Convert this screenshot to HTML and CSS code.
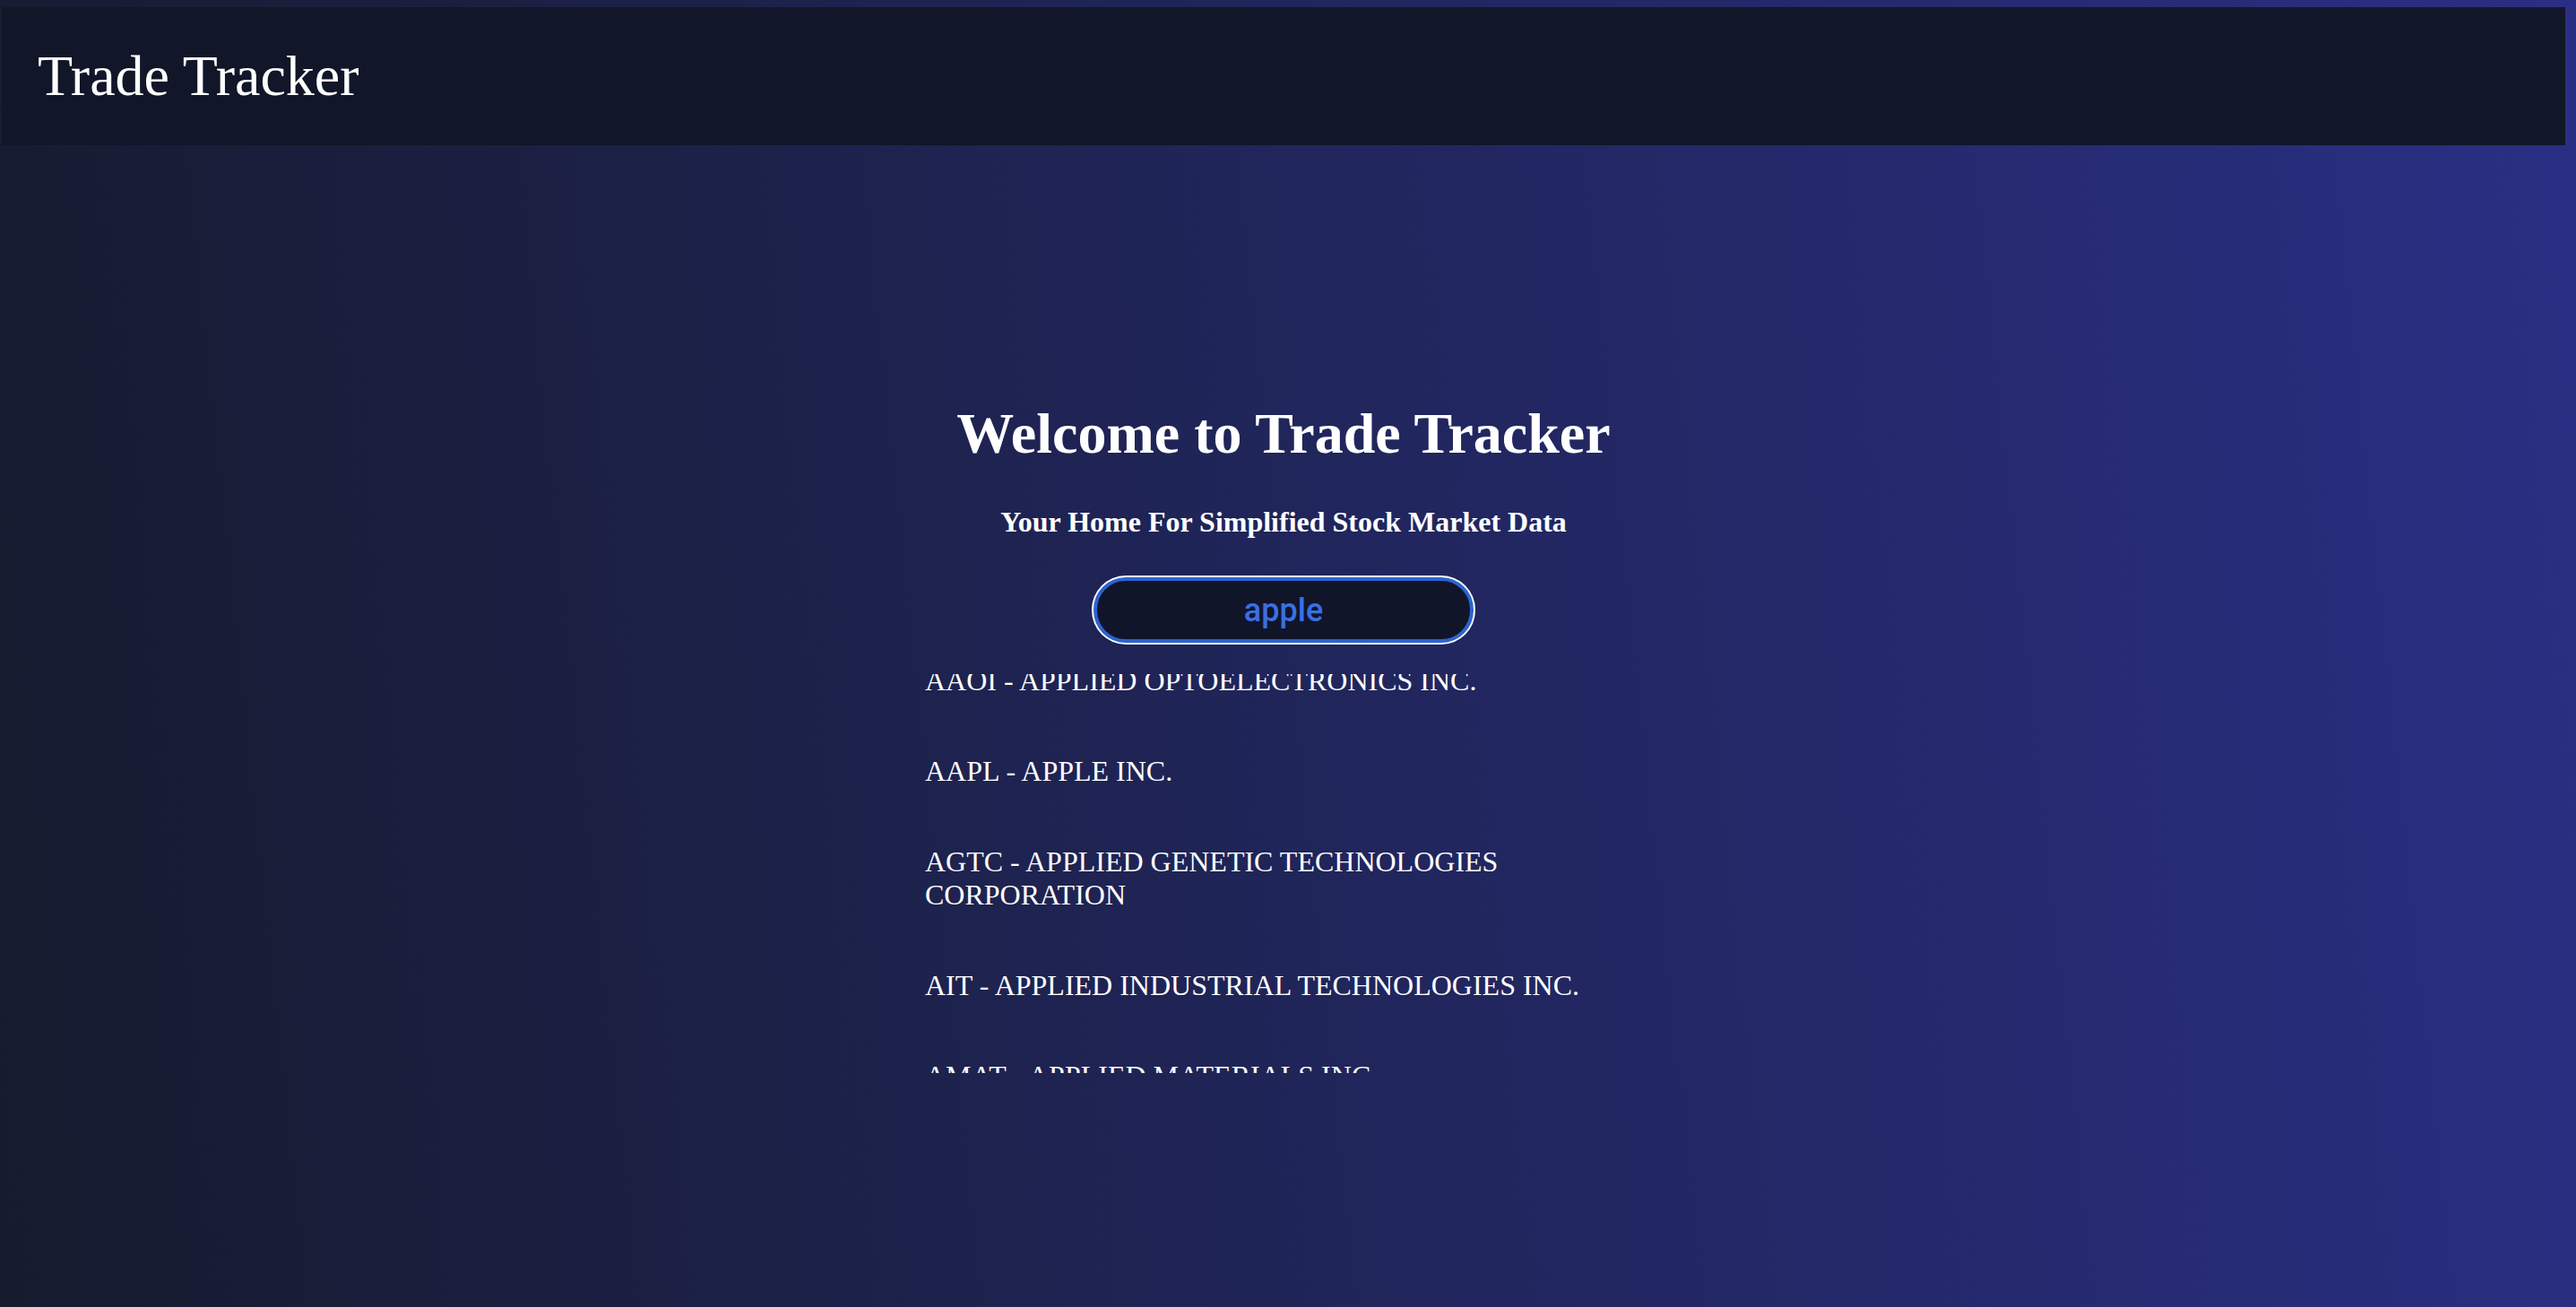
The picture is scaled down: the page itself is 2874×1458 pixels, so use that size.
FILE: index.html
```html
<!DOCTYPE html>
<html lang="en">
<head>
<meta charset="utf-8">
<title>Trade Tracker</title>
<link rel="stylesheet" href="styles.css">
</head>
<body>
<div class="page">
  <header class="topbar">
    <div class="brand">Trade Tracker</div>
  </header>
  <main class="hero">
    <h1 class="title">Welcome to Trade Tracker</h1>
    <h2 class="subtitle">Your Home For Simplified Stock Market Data</h2>
    <input class="search" type="text" value="apple">
    <div class="results">
      <ul class="result-list">
        <li class="result">AAOI - APPLIED OPTOELECTRONICS INC.</li>
        <li class="result">AAPL - APPLE INC.</li>
        <li class="result">AGTC - APPLIED GENETIC TECHNOLOGIES CORPORATION</li>
        <li class="result">AIT - APPLIED INDUSTRIAL TECHNOLOGIES INC.</li>
        <li class="result">AMAT - APPLIED MATERIALS INC.</li>
        <li class="result">APLE - APPLE HOSPITALITY REIT INC.</li>
      </ul>
    </div>
  </main>
</div>
</body>
</html>
```

FILE: styles.css
```css
html, body {
  margin: 0;
  padding: 0;
}

body {
  font-family: "Liberation Serif", "Times New Roman", serif;
  color: #ffffff;
  background: linear-gradient(84deg, #161b2e 0%, #20255a 50%, #2a2f84 100%);
  min-height: 100vh;
  overflow: hidden;
}

.page {
  display: flex;
  flex-direction: column;
  min-height: 1458px;
}

.topbar {
  margin: 8px 12px 0 2px;
  height: 154px;
  background: #111628;
  display: flex;
  align-items: center;
  padding-left: 40px;
}

.brand {
  font-size: 64px;
  line-height: 74px;
  font-weight: normal;
  margin-top: 0;
}

.hero {
  display: flex;
  flex-direction: column;
  align-items: center;
  padding-top: 285px;
  padding-right: 10px;
}

.title {
  margin: 0;
  font-size: 64px;
  line-height: 74px;
  font-weight: bold;
}

.subtitle {
  margin: 43px 0 0;
  font-size: 32px;
  line-height: 37px;
  font-weight: bold;
}

.search {
  margin-top: 43px;
  width: 424px;
  height: 73px;
  box-sizing: border-box;
  border: 4px solid #2d63d0;
  border-radius: 36px;
  box-shadow: 0 0 0 2px #ffffff;
  background: #10152a;
  color: #3b6fe3;
  font-family: Roboto, "Noto Sans", sans-serif;
  font-weight: 500;
  font-size: 36px;
  text-align: center;
  outline: none;
  padding: 0 20px;
}

.results {
  margin-top: 35px;
  width: 810px;
  height: 445px;
  overflow: hidden;
  padding-left: 10px;
}

.result-list {
  list-style: none;
  margin: -11px 0 0;
  padding: 0;
  display: flex;
  flex-direction: column;
  gap: 64px;
}

.result {
  font-size: 32px;
  line-height: 37px;
}
```
